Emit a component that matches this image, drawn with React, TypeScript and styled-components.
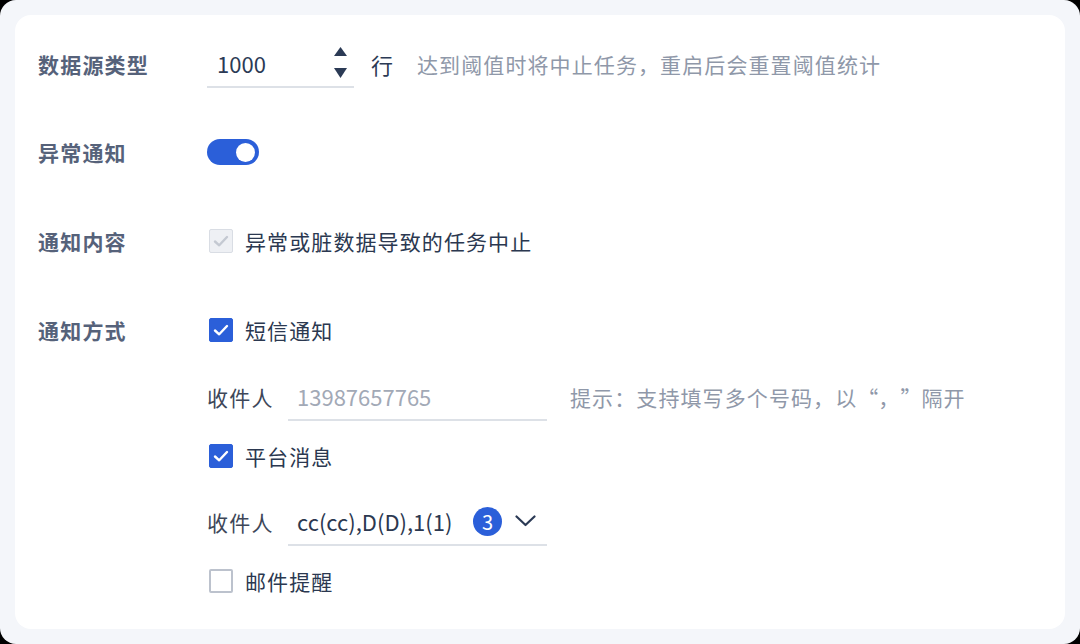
import React from 'react'
import styled, { createGlobalStyle } from 'styled-components'

const GlobalStyle = createGlobalStyle`
  html, body {
    margin: 0;
    padding: 0;
    background: #000;
  }
  * {
    box-sizing: border-box;
  }
`

const font = `"Noto Sans CJK SC", "Noto Sans", sans-serif`

const Page = styled.div`
  width: 1080px;
  height: 644px;
  padding: 15px;
  background: #f4f6fa;
  border-radius: 16px;
  font-family: ${font};
`

const Card = styled.div`
  height: 614px;
  background: #ffffff;
  border-radius: 16px;
  padding: 25px 0 0 23px;
  display: flex;
  flex-direction: column;
`

const FieldRow = styled.div<{ $top?: number; $start?: boolean }>`
  display: grid;
  grid-template-columns: 169px 1fr;
  align-items: ${p => (p.$start ? 'start' : 'center')};
  min-height: 48px;
  margin-top: ${p => p.$top ?? 0}px;
`

const Label = styled.div`
  font-size: 21px;
  font-weight: 700;
  color: #56627a;
  line-height: 48px;
  letter-spacing: 1.2px;
`

const Inline = styled.div`
  display: flex;
  align-items: center;
`

const NumberBox = styled.div`
  width: 147px;
  height: 48px;
  border-bottom: 2px solid #dde1e7;
  display: flex;
  align-items: center;
  justify-content: space-between;
  padding: 0 7px 0 10px;
  font-size: 22px;
  color: #2b3a55;
`

const Spinner = styled.div`
  display: flex;
  flex-direction: column;
  gap: 11px;
  margin-top: -1px;
`

const Unit = styled.span`
  font-size: 22px;
  color: #2b3a55;
  margin-left: 17px;
`

const Hint = styled.span<{ $left?: number }>`
  font-size: 21px;
  color: #8f98a9;
  margin-left: ${p => p.$left ?? 24}px;
  letter-spacing: 1.1px;
`

const Quote = styled.span`
  display: inline-block;
  width: 21px;
  text-align: left;
`

const Switch = styled.div<{ $on: boolean }>`
  width: 52px;
  height: 26px;
  border-radius: 13px;
  background: ${p => (p.$on ? '#2b5fd9' : '#c9ced8')};
  display: flex;
  align-items: center;
  justify-content: ${p => (p.$on ? 'flex-end' : 'flex-start')};
  padding: 0 4px;
`

const Knob = styled.div`
  width: 19px;
  height: 19px;
  border-radius: 50%;
  background: #ffffff;
`

const Options = styled.div`
  display: flex;
  flex-direction: column;
`

const CheckLine = styled.label<{ $top?: number }>`
  display: flex;
  align-items: center;
  height: 48px;
  gap: 12px;
  margin-top: ${p => p.$top ?? 0}px;
  font-size: 21px;
  color: #2b3850;
  letter-spacing: 1.1px;
`

type BoxState = 'checked' | 'unchecked' | 'disabled'

const Box = styled.span<{ $state: BoxState }>`
  width: 24px;
  height: 24px;
  margin-left: 2px;
  border-radius: 2px;
  display: flex;
  align-items: center;
  justify-content: center;
  background: ${p =>
    p.$state === 'checked' ? '#2b5fd9' : p.$state === 'disabled' ? '#eef0f4' : '#ffffff'};
  border: ${p =>
    p.$state === 'checked'
      ? '1px solid #2b5fd9'
      : p.$state === 'disabled'
      ? '1px solid #d9dde4'
      : '2px solid #bcc2cd'};
`

const SubField = styled.div<{ $top?: number }>`
  display: flex;
  align-items: center;
  height: 48px;
  margin-top: ${p => p.$top ?? 0}px;
`

const SubLabel = styled.span`
  width: 81px;
  font-size: 21px;
  color: #3e4759;
  letter-spacing: 1.3px;
`

const TextBox = styled.div<{ $muted?: boolean }>`
  width: 259px;
  height: 48px;
  border-bottom: 2px solid #dde1e7;
  display: flex;
  align-items: center;
  padding: 0 11px 0 9px;
  font-size: 22px;
  color: ${p => (p.$muted ? '#a2a9b6' : '#2b3850')};
`

const Grow = styled.span`
  flex: 1;
`

const Badge = styled.span`
  width: 29px;
  height: 29px;
  border-radius: 50%;
  background: #2b5fd9;
  color: #ffffff;
  font-size: 20px;
  display: flex;
  align-items: center;
  justify-content: center;
  margin-right: 13px;
`

const Check = ({ state, children, top }: { state: BoxState; children: React.ReactNode; top?: number }) => (
  <CheckLine $top={top}>
    <Box $state={state}>
      {state !== 'unchecked' && (
        <svg width="18" height="18" viewBox="0 0 18 18">
          <polyline
            points="3,9.5 7.2,13.3 15,5"
            fill="none"
            stroke={state === 'checked' ? '#ffffff' : '#c4c9d2'}
            strokeWidth="2.4"
            strokeLinecap="round"
            strokeLinejoin="round"
          />
        </svg>
      )}
    </Box>
    {children}
  </CheckLine>
)

export default function App() {
  return (
    <>
      <GlobalStyle />
      <Page>
        <Card>
          <FieldRow>
            <Label>数据源类型</Label>
            <Inline>
              <NumberBox>
                <span>1000</span>
                <Spinner>
                  <svg width="13" height="10" viewBox="0 0 13 10">
                    <polygon points="6.5,0 13,9 0,9" fill="#2b3a55" />
                  </svg>
                  <svg width="13" height="10" viewBox="0 0 13 10">
                    <polygon points="0,0 13,0 6.5,10" fill="#2b3a55" />
                  </svg>
                </Spinner>
              </NumberBox>
              <Unit>行</Unit>
              <Hint>达到阈值时将中止任务，重启后会重置阈值统计</Hint>
            </Inline>
          </FieldRow>

          <FieldRow $top={40}>
            <Label>异常通知</Label>
            <Inline>
              <Switch $on>
                <Knob />
              </Switch>
            </Inline>
          </FieldRow>

          <FieldRow $top={41}>
            <Label>通知内容</Label>
            <Options>
              <Check state="disabled">异常或脏数据导致的任务中止</Check>
            </Options>
          </FieldRow>

          <FieldRow $top={41} $start>
            <Label>通知方式</Label>
            <Options>
              <Check state="checked">短信通知</Check>
              <SubField $top={19}>
                <SubLabel>收件人</SubLabel>
                <TextBox $muted>13987657765</TextBox>
                <Hint $left={23}>
                  提示：支持填写多个号码，以<Quote>“</Quote>，<Quote>”</Quote>隔开
                </Hint>
              </SubField>
              <Check state="checked" top={11}>平台消息</Check>
              <SubField $top={18}>
                <SubLabel>收件人</SubLabel>
                <TextBox>
                  <span>cc(cc),D(D),1(1)</span>
                  <Grow />
                  <Badge>3</Badge>
                  <svg width="21" height="12" viewBox="0 0 21 12">
                    <polyline
                      points="1.5,1.5 10.5,10 19.5,1.5"
                      fill="none"
                      stroke="#2b3a55"
                      strokeWidth="2.2"
                      strokeLinecap="round"
                      strokeLinejoin="round"
                    />
                  </svg>
                </TextBox>
              </SubField>
              <Check state="unchecked" top={11}>邮件提醒</Check>
            </Options>
          </FieldRow>
        </Card>
      </Page>
    </>
  )
}
